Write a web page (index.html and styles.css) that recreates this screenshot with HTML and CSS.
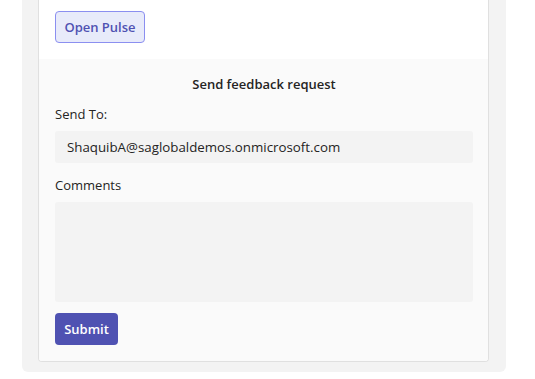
FILE: index.html
```html
<!DOCTYPE html>
<html lang="en">
<head>
  <meta charset="UTF-8" />
  <meta name="viewport" content="width=device-width, initial-scale=1.0" />
  <title>Pulse feedback</title>
  <link rel="stylesheet" href="styles.css">
</head>
<body>
  <div class="panel">
    <div class="card">
      <div class="card-top">
        <button class="button open">Open Pulse</button>
      </div>
      <form class="feedback" onsubmit="return false">
        <h2>Send feedback request</h2>
        <label for="sendTo">Send To:</label>
        <input id="sendTo" class="field" type="text" value="ShaquibA@saglobaldemos.onmicrosoft.com">
        <label for="comments">Comments</label>
        <textarea id="comments" class="field comments"></textarea>
        <div class="actions">
          <button class="button submit" type="submit">Submit</button>
        </div>
      </form>
    </div>
  </div>
</body>
</html>
```

FILE: styles.css
```css
* {
  box-sizing: border-box;
  margin: 0;
  padding: 0;
  font-family: 'Open Sans', 'Noto Sans', sans-serif;
}

body {
  background: #fff;
  color: #252423;
  font-size: 13px;
}

.panel {
  width: 484px;
  margin-left: 22px;
  padding: 0 17px 10px 16px;
  background: #f3f3f3;
  border-radius: 0 0 6px 6px;
}

.card {
  background: #fff;
  border: 1px solid #e0e0e0;
  border-top: none;
  border-radius: 0 0 4px 4px;
  overflow: hidden;
}

.card-top {
  padding: 11px 16px 16px;
}

.button {
  height: 32px;
  border-radius: 4px;
  font-size: 13px;
  font-weight: 600;
  cursor: pointer;
}

.button.open {
  width: 90px;
  background: #e8ebfa;
  border: 1px solid #8b8ff0;
  color: #4f52b2;
}

.feedback {
  display: flex;
  flex-direction: column;
  background: #fafafa;
  padding: 15px 15px 16px 16px;
}

.feedback h2 {
  font-size: 13px;
  font-weight: 600;
  line-height: 20px;
  text-align: center;
  margin-bottom: 10px;
}

.feedback label {
  line-height: 20px;
  margin-bottom: 7px;
}

.field {
  width: 100%;
  height: 32px;
  background: #f3f3f3;
  border: none;
  border-radius: 3px;
  padding: 0 12px;
  font-size: 13.3px;
  color: #252423;
  margin-bottom: 12px;
  outline: none;
}

.field.comments {
  height: 100px;
  resize: none;
  margin-bottom: 11px;
}

.button.submit {
  width: 63px;
  background: #4f52b2;
  border: none;
  color: #fff;
}
```
